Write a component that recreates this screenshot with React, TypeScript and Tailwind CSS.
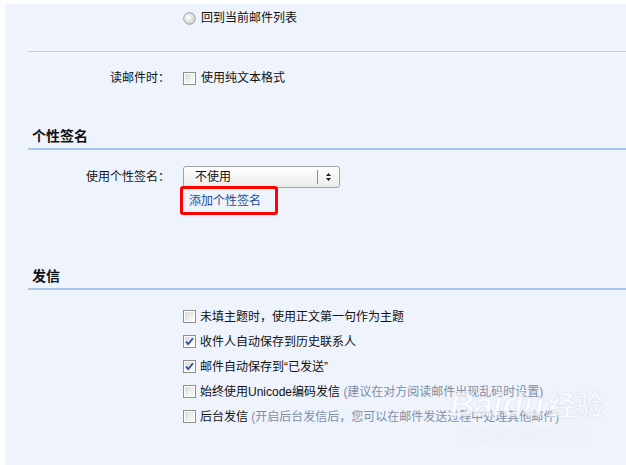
import React from 'react';

const font = { fontFamily: '"Liberation Sans", "Noto Sans CJK SC", sans-serif' };

const Checkbox = ({ checked = false }: { checked?: boolean }) => (
  <svg width="13" height="13" viewBox="0 0 13 13" className="shrink-0">
    <defs>
      <linearGradient id={checked ? 'cbg1' : 'cbg0'} x1="0" y1="0" x2="1" y2="1">
        <stop offset="0" stopColor="#d9d9d9" />
        <stop offset="1" stopColor="#ffffff" />
      </linearGradient>
    </defs>
    <rect x="0.5" y="0.5" width="12" height="12" fill="#fff" stroke="#8e8f8f" />
    <rect x="2" y="2" width="9" height="9" fill={`url(#${checked ? 'cbg1' : 'cbg0'})`} />
    {checked && (
      <path d="M3 6.5 L5.2 9 L10 3.2" fill="none" stroke="#2c4f9e" strokeWidth="1.8" />
    )}
  </svg>
);

const Radio = () => (
  <svg width="13" height="13" viewBox="0 0 13 13" className="shrink-0">
    <defs>
      <radialGradient id="rg" cx="0.4" cy="0.4" r="0.6">
        <stop offset="0" stopColor="#ffffff" />
        <stop offset="1" stopColor="#cfcfcf" />
      </radialGradient>
    </defs>
    <circle cx="6.5" cy="6.5" r="5.8" fill="url(#rg)" stroke="#a0a0a0" />
  </svg>
);

const Row = ({ label, children }: { label?: string; children: React.ReactNode }) => (
  <div className="flex items-center h-[26px]">
    <div className="w-[142px] text-right shrink-0">{label}</div>
    <div className="ml-[13px] flex items-center gap-[5px]">{children}</div>
  </div>
);

const CheckRow = ({ checked, text, hint }: { checked?: boolean; text: string; hint?: string }) => (
  <div className="flex items-center h-[25px] pl-[155px] gap-[4px]">
    <Checkbox checked={checked} />
    <span className="whitespace-nowrap">
      {text}
      {hint && <span className="text-[#7f8ea6]"> {hint}</span>}
    </span>
  </div>
);

const App = () => {
  return (
    <div className="w-[626px] h-[465px] bg-white pl-[5px] pt-[4px] overflow-hidden text-[12px] text-[#111]" style={font}>
      <div className="relative h-full bg-[#eef3fc] pl-[23px] pt-[1px]">
        <Row>
          <Radio />
          <span>回到当前邮件列表</span>
        </Row>
        <div className="mt-[20px] h-px bg-[#c9ced6]" />

        <div className="mt-[13px]">
          <Row label="读邮件时：">
            <Checkbox />
            <span>使用纯文本格式</span>
          </Row>
        </div>

        <h2 className="mt-[33px] h-[26px] pl-[4px] flex items-center text-[14px] font-bold border-b-2 border-[#a9c7ea]">
          个性签名
        </h2>

        <div className="mt-[15px] flex items-center h-[24px]">
          <div className="w-[142px] text-right shrink-0">使用个性签名：</div>
          <div className="ml-[13px] w-[157px] h-[22px] flex items-center rounded-[3px] border border-[#a3a3a3] bg-gradient-to-b from-white to-[#ececec]">
            <span className="flex-1 pl-[11px]">不使用</span>
            <span className="w-px h-[14px] bg-[#8c8c8c]" />
            <svg width="21" height="12" viewBox="0 0 21 12">
              <path d="M8 5 L10.5 2 L13 5 Z M8 7 L10.5 10 L13 7 Z" fill="#222" />
            </svg>
          </div>
        </div>
        <div className="relative z-10 -mt-[3px] ml-[152px] w-[98px] h-[29px] rounded-[3px] border-[3px] border-[#f00] flex items-center pl-[6px]">
          <a className="text-[#1f4f99] whitespace-nowrap">添加个性签名</a>
        </div>

        <h2 className="mt-[49px] h-[26px] pl-[4px] flex items-center text-[14px] font-bold border-b-2 border-[#a9c7ea]">
          发信
        </h2>

        <div className="mt-[14px]">
          <CheckRow text="未填主题时，使用正文第一句作为主题" />
          <CheckRow checked text="收件人自动保存到历史联系人" />
          <CheckRow checked text="邮件自动保存到“已发送”" />
          <CheckRow text="始终使用Unicode编码发信" hint="(建议在对方阅读邮件出现乱码时设置)" />
          <CheckRow text="后台发信" hint="(开启后台发信后，您可以在邮件发送过程中处理其他邮件)" />
        </div>

        <div className="absolute right-[22px] bottom-[18px] flex flex-col items-center text-white pointer-events-none opacity-70">
          <div className="flex items-end gap-[4px] leading-none">
            <span className="text-[34px] font-bold italic" style={{ WebkitTextStroke: '1px #e2e7ef' }}>Baidu</span>
            <span className="text-[28px] font-bold" style={{ WebkitTextStroke: '1px #e2e7ef' }}>经验</span>
          </div>
          <span className="text-[16px] mt-[2px]" style={{ WebkitTextStroke: '0.5px #e2e7ef' }}>jingyan.baidu.com</span>
        </div>
      </div>
    </div>
  );
};

export default App;
